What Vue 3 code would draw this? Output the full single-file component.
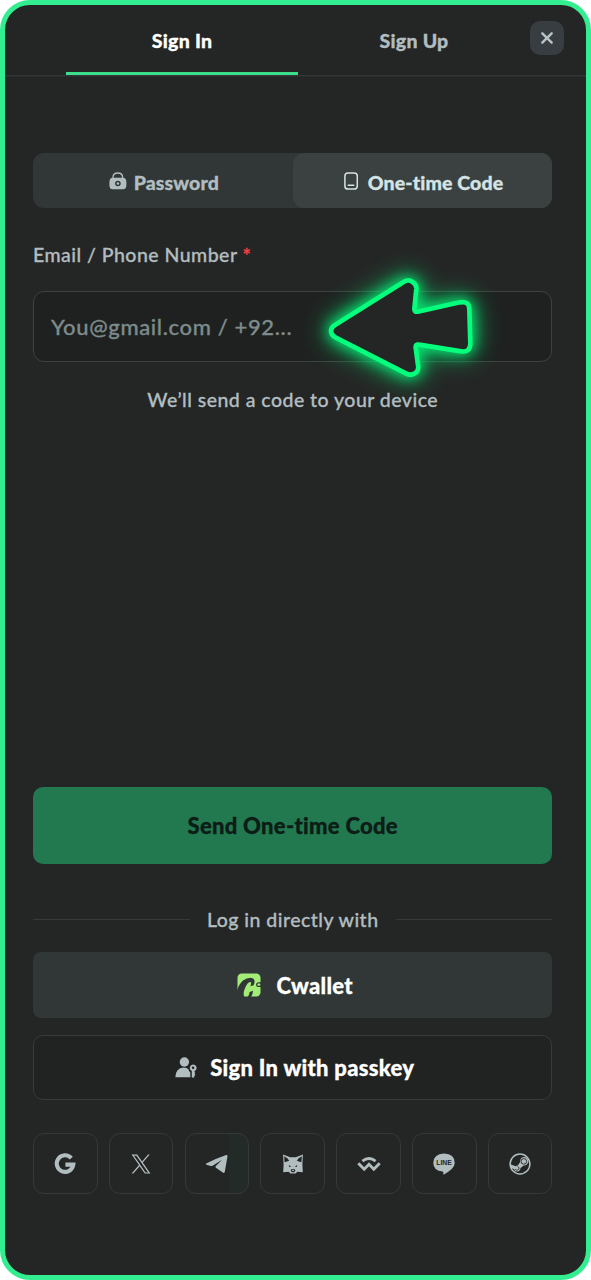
<script setup>
import { ref } from 'vue'

const mode = ref('code')
const contact = ref('')
const socials = ['google', 'x', 'telegram', 'metamask', 'walletconnect', 'line', 'steam']
</script>

<template>
  <main class="screen">
    <header class="header">
      <nav class="tabs">
        <a class="tab active"><span>Sign In</span></a>
        <a class="tab"><span>Sign Up</span></a>
      </nav>
      <button class="close" aria-label="Close">
        <svg viewBox="0 0 34 34"><path d="M12.3 12.3l9.4 9.4M21.7 12.3l-9.4 9.4" /></svg>
      </button>
    </header>

    <section class="content">
      <div class="segment">
        <button class="seg" :class="{ on: mode === 'password' }" @click="mode = 'password'">
          <svg class="lock" viewBox="0 0 18 18">
            <path d="M4 8V5.3Q4 1 8.8 1T13.6 5.3V8" fill="none" stroke="currentColor" stroke-width="1.3" />
            <path fill="currentColor" fill-rule="evenodd" d="M3.5 5.8H14.2Q17.4 6 17.4 10.5V13Q17.4 17.2 14 17.2H3.5Q.4 17.2.4 13V10.5Q.4 6 3.5 5.8ZM8.9 8.7A2.8 2.8 0 1 0 8.9 14.3 2.8 2.8 0 1 0 8.9 8.7Z" />
            <circle cx="8.9" cy="11.5" r="1.3" fill="currentColor" />
          </svg>
          <span>Password</span>
        </button>
        <button class="seg" :class="{ on: mode === 'code' }" @click="mode = 'code'">
          <svg class="phone" viewBox="0 0 14 18">
            <rect x=".9" y=".9" width="12.4" height="16.2" rx="3.2" />
            <path d="M4.2 13.3h5.6" />
          </svg>
          <span>One-time Code</span>
        </button>
      </div>

      <label class="label" for="contact">Email / Phone Number <i>*</i></label>
      <div class="field">
        <input id="contact" v-model="contact" placeholder="You@gmail.com / +92..." />
        <svg class="arrow" viewBox="0 0 870 480">
          <path d="M105 180L312 50Q325 42 338 51Q350 59 349 72L343 132Q343 142 353 140L480 112Q507 107 508 132L511 235Q511 263 484 259L357 239Q346 237 347 248L355 307Q354 321 343 326Q331 332 319 326L106 217Q93 210 93 197Q94 187 105 180Z" />
        </svg>
      </div>
      <p class="help">We’ll send a code to your device</p>

      <button class="send"><span>Send One-time Code</span></button>

      <div class="divider"><span>Log in directly with</span></div>

      <button class="alt filled">
        <svg class="cw" viewBox="0 0 24 24">
          <rect x=".5" y=".5" width="23" height="23" rx="4.2" fill="#a4ec78" />
          <path fill="#313736" d="M0 17.5Q2 11 6 7.5Q10 4.6 14.5 4.9Q18.6 5.5 17.3 10.4L16.6 12.2L13.4 13.2Q15 9.1 13.2 9.1Q10.2 9.5 7.9 15.5Q5.7 20.5 7.3 24H0Z" />
          <path fill="#313736" d="M10.6 24Q12.3 22 12.6 18.9L16.1 17.8Q15.8 21.4 14 24Z" />
          <path fill="#313736" d="M24 9.2H21.3Q19 9.3 19 11.7T21.3 14.1H24Z" />
          <rect x="20.4" y="10.6" width="2.9" height="2.2" rx=".8" fill="#a4ec78" />
        </svg>
        <span>Cwallet</span>
      </button>
      <button class="alt outlined">
        <svg class="user" viewBox="0 0 22 21" fill="currentColor">
          <circle cx="9.4" cy="5" r="4.7" />
          <path d="M.3 20.3Q.6 11 8.7 10.5Q12 10.5 13.4 12.2Q13.8 14.2 15.3 15.4V20.3Z" />
          <path fill-rule="evenodd" d="M18.1 7.4A3.4 3.4 0 0 1 19.6 13.9V15.2L20.3 15.9 19.5 16.8 20.3 17.8 19.3 18.9V20.6H16.8V13.9A3.4 3.4 0 0 1 18.1 7.4ZM18.1 9.4A1.3 1.3 0 1 0 18.1 12 1.3 1.3 0 1 0 18.1 9.4Z" />
        </svg>
        <span>Sign In with passkey</span>
      </button>

      <div class="socials">
        <button v-for="s in socials" :key="s" class="social" :class="s" :aria-label="s">
          <svg viewBox="0 0 24 24" fill="currentColor">
            <path v-if="s === 'google'" fill="none" stroke="currentColor" stroke-width="4.1" d="M18.3 6.1A8.3 8.3 0 1 0 20.3 12.6H12.4" />
            <path v-else-if="s === 'x'" transform="translate(2.4 2.4) scale(.8)" d="M14.234 10.162 22.977 0h-2.072l-7.591 8.824L7.251 0H.258l9.168 13.343L.258 24H2.33l8.016-9.318L16.749 24h6.993zm-2.837 3.299-.929-1.329L3.076 1.56h3.182l5.965 8.532.929 1.329 7.754 11.09h-3.182z" />
            <path v-else-if="s === 'telegram'" d="M1.2 11.4Q11 6.5 21.2 3Q22.8 2.7 22.5 4.5L19.8 19.8Q19.4 21.6 17.8 20.6L10.9 15.8Q10 15 10.8 14.1L17.2 7.8L7.6 13.8Q6.8 14.2 5.8 14L1.5 12.7Q.2 12 1.2 11.4Z" />
            <g v-else-if="s === 'metamask'">
              <path fill-rule="evenodd" d="M2.1 2.4L9.2 5.2H14.8L21.9 2.4L21.4 12.5L21.8 20.2L16.4 19.7L14.5 21.4H9.5L7.6 19.7L2.2 20.2L2.6 12.5ZM3.2 4.3L3.6 10.2L8.2 8.8L6.6 6.4ZM20.8 4.3L20.4 10.2L15.8 8.8L17.4 6.4Z" />
              <path fill="#242625" d="M7.8 13L10.2 14.4 8.2 15ZM16.2 13L13.8 14.4 15.8 15ZM10.1 17.2H13.9L14.3 18.8 13.2 20.2H10.8L9.7 18.8Z" />
              <path d="M10.8 18H13.2L12.7 18.9H11.3Z" />
            </g>
            <path v-else-if="s === 'walletconnect'" fill="none" stroke="currentColor" stroke-width="2.9" d="M5.4 9.2Q12 3.8 18.6 9.2M1.3 11.2L7.2 17.2L12 12.3L16.8 17.2L22.7 11.2" />
            <g v-else-if="s === 'line'">
              <path d="M12 1.6Q22.7 2.1 22.7 11Q22.7 14 19.7 17Q16.4 20 12 22.4Q11 22.8 11.3 21.5Q11.7 19.7 10.7 19.6Q1.4 18.8 1.3 11Q1.4 2.2 12 1.6Z" />
              <text x="12" y="13.3" class="line-word" text-anchor="middle">LINE</text>
            </g>
            <g v-else>
              <circle cx="12" cy="12" r="9.9" fill="none" stroke="currentColor" stroke-width="1.5" />
              <path d="M2.5 12.2L7.5 14.2Q8.8 13.5 9.8 13.6L12 10.3Q12 5.7 15.7 5.1Q20 5.2 20.2 9.4Q19.8 13.4 15.7 13.6L12.5 16Q12.3 19.4 9.2 19.6Q6.8 19.5 6 17.2L2.8 15.8Z" />
              <circle cx="15.8" cy="9.4" r="2.8" fill="none" stroke="#242625" stroke-width=".9" />
              <path fill="none" stroke="#242625" stroke-width=".8" d="M7.1 17.4Q9.2 19.3 11 17.2Q11.7 15 9.4 14.5" />
            </g>
          </svg>
        </button>
      </div>
    </section>
  </main>
</template>

<style>
body { background: #fff; }
</style>

<style scoped>
* { box-sizing: border-box; }
.screen {
  width: 591px; height: 1280px; overflow: hidden;
  border: 5px solid #33ed91; border-radius: 30px;
  background: #242625; color: #b2bdc0;
  font-family: Lato, "Open Sans", sans-serif; font-size: 19.5px; font-weight: 500;
  letter-spacing: .47px; font-variant-ligatures: none;
  -webkit-text-stroke: .3px currentColor;
}
button { border: 0; padding: 0; margin: 0; background: none; font: inherit; color: inherit; letter-spacing: inherit; }
svg { display: block; flex: none; }
span { white-space: nowrap; }
.header {
  display: flex; height: 71px; padding-left: 61px;
  border-bottom: 1px solid #343738; box-shadow: 0 1px #2a2d2d;
}
.tabs { display: flex; }
.tab {
  width: 232px; height: 70px; display: flex; justify-content: center; align-items: center;
  border-top: 3px solid transparent; border-bottom: 3px solid transparent;
  font-weight: 900; font-size: 19.5px; letter-spacing: .25px;
}
.tab.active { color: #fff; border-bottom-color: #3bdf8b; }
.close {
  width: 34px; height: 34px; margin-top: 16px; border-radius: 10px;
  background: #373d40; color: #b7c3c6;
}
.close path { fill: none; stroke: currentColor; stroke-width: 2.4; stroke-linecap: round; }
.content { padding: 77px 33.6px 0 28px; }
.segment { display: flex; height: 55px; border-radius: 11px; background: #313736; }
.seg {
  flex: 1; display: flex; align-items: center; justify-content: center; padding-left: 2px;
  border-radius: 11px; font-weight: 900; font-size: 19.5px; letter-spacing: .12px;
}
.seg > span { padding-top: 3px; }
.seg.on { background: #3a4140; color: #d5e3e5; }
.lock { width: 18px; height: 18px; margin-right: 7px; }
.phone { width: 14px; height: 18px; margin-right: 10px; fill: none; stroke: currentColor; stroke-width: 1.5; stroke-linecap: round; }
.label { display: block; height: 24px; margin-top: 35px; line-height: 24px; white-space: nowrap; }
.label i { color: #ed4040; font-style: normal; font-weight: 700; }
.field { position: relative; height: 71px; margin-top: 24px; }
.field input {
  display: block; width: 100%; height: 100%; padding: 0 17px; outline: 0;
  border: 1px solid #3b4342; border-radius: 11px; background: #1f2120;
  font: inherit; font-size: 22px; color: #d5e3e5; letter-spacing: .64px;
}
.field input::placeholder { color: #7d8b8b; opacity: 1; }
.arrow { position: absolute; left: 267px; top: -26px; width: 290px; height: 160px; overflow: visible; pointer-events: none; }
.arrow path {
  fill: #242625; stroke: #05ff7c; stroke-width: 14; stroke-linejoin: round;
  filter: drop-shadow(0 0 20px #05e873) drop-shadow(0 0 36px rgba(5, 232, 115, .8));
}
.help { height: 24px; margin: 26px 0 0; line-height: 24px; text-align: center; }
.send {
  display: flex; align-items: center; justify-content: center; width: 100%; height: 77px;
  margin-top: 375px; border-radius: 10px; background: #23794f; color: #0c1c16;
  font-size: 22px; font-weight: 900; letter-spacing: .28px;
}
.divider { display: flex; align-items: center; gap: 17px; height: 24px; margin: 43px 0 21px; }
.divider::before, .divider::after { content: ""; flex: 1; height: 1px; background: #363a3a; }
.divider span { padding-top: 1px; }
.alt {
  display: flex; align-items: center; justify-content: center; width: 100%; height: 66px;
  padding-left: 4px; border-radius: 10px; font-size: 22px; font-weight: 900; letter-spacing: .28px;
}
.alt span { color: #fff; }
.filled { background: #313736; border-radius: 8px; }
.outlined { margin-top: 17px; height: 65px; border: 1px solid #363b3b; background: #212322; }
.cw { width: 24px; height: 24px; margin-right: 16px; }
.user { width: 22px; height: 21px; margin-right: 13px; }
.socials { display: grid; grid-template-columns: repeat(7, 1fr); gap: 11.3px; margin-top: 33px; }
.social {
  height: 61px; display: flex; align-items: center; justify-content: center;
  border: 1px solid #343838; border-radius: 11px;
}
.social svg { width: 24px; height: 24px; }
.telegram { background: linear-gradient(90deg, transparent 69%, #232b28 69%); }
.line-word { font: 900 6.8px "Liberation Sans", Arial, sans-serif; letter-spacing: 0; fill: #242625; -webkit-text-stroke: 0; }
</style>
